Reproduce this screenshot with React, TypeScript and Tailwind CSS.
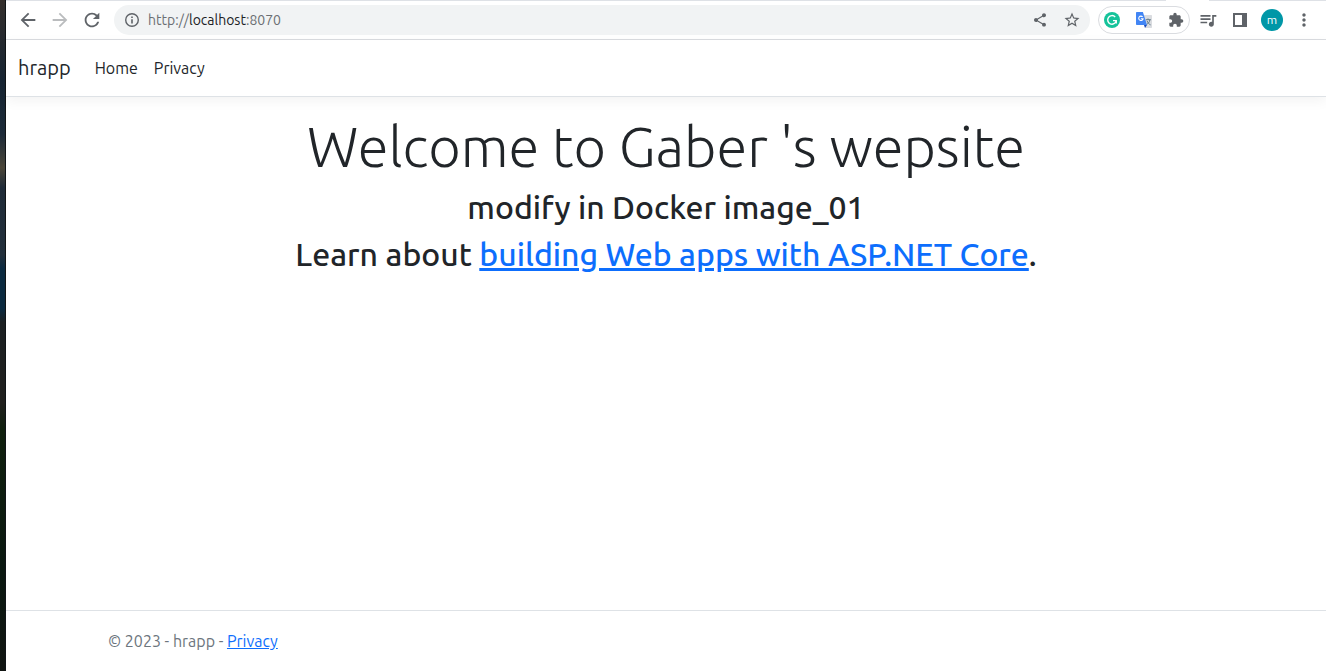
import React from "react";
import {
  MdArrowBack,
  MdArrowForward,
  MdExtension,
  MdMoreVert,
  MdQueueMusic,
  MdRefresh,
  MdShare,
  MdStarOutline,
} from "react-icons/md";

function ToolButton({ label, className = "text-[#5f6368]", children }: { label: string; className?: string; children: React.ReactNode }) {
  return (
    <button type="button" aria-label={label} className={`flex size-8 shrink-0 items-center justify-center ${className}`}>
      {children}
    </button>
  );
}

function InfoIcon() {
  return (
    <svg viewBox="0 0 16 16" className="size-4 text-[#5f6368]" aria-hidden="true">
      <circle cx="8" cy="8" r="6.3" fill="none" stroke="currentColor" strokeWidth="1.4" />
      <path d="M7.2 7.2h1.6v4.2H7.2zM7.2 4.5h1.6v1.6H7.2z" fill="currentColor" />
    </svg>
  );
}

function GrammarIcon() {
  return (
    <svg viewBox="0 0 16 16" className="size-4" aria-hidden="true">
      <circle cx="8" cy="8" r="8" fill="#15c39a" />
      <path d="M11.2 5A4.3 4.3 0 1 0 12.2 8.8" fill="none" stroke="#fff" strokeWidth="1.4" />
      <path d="M9 8.7h3.3v2.8" fill="none" stroke="#fff" strokeWidth="1.3" />
    </svg>
  );
}

function TranslateIcon() {
  return (
    <svg viewBox="0 0 16 16" className="size-4" aria-hidden="true">
      <path d="M6 3h9.3a.7.7 0 0 1 .7.7v11.6a.7.7 0 0 1-.7.7H9.5z" fill="#dadce0" />
      <path d="M9.8 7.7h5M12 6.5v1.2M13.9 7.8c-.4 2.3-1.8 4-3.6 4.9M11 8.8c.8 1.9 1.9 3.2 3.6 4.1" fill="none" stroke="#607988" strokeWidth="1" />
      <path d="M8 13h3l-2 3z" fill="#1a49b8" />
      <path d="M.8 0h6.1L11 13H.8a.8.8 0 0 1-.8-.8V.8A.8.8 0 0 1 .8 0z" fill="#4285f4" />
      <path d="M6.6 4.9A2.2 2.2 0 1 0 7.1 6.7H4.9" fill="none" stroke="#fff" strokeWidth="1.1" />
    </svg>
  );
}

function SidePanelIcon() {
  return (
    <svg viewBox="0 0 14 14" className="size-3.5" aria-hidden="true">
      <path d="M0 0h14v14H0zM2 2v10h7V2z" fill="currentColor" fillRule="evenodd" />
    </svg>
  );
}

function BrowserToolbar() {
  return (
    <div className="shrink-0">
      <div className="flex h-px">
        <div className="flex-1 bg-[#dee1e6]" />
        <div className="w-[43px]" />
        <div className="w-[117px] bg-[#dee1e6]" />
      </div>
      <div className="flex h-[39px] items-center border-b border-[#dadce0] px-[6px]">
        <ToolButton label="Back">
          <MdArrowBack size={22} />
        </ToolButton>
        <ToolButton label="Forward" className="text-[#babcbe]">
          <MdArrowForward size={22} />
        </ToolButton>
        <ToolButton label="Reload">
          <MdRefresh size={22} />
        </ToolButton>
        <div className="ml-1.5 flex h-[30px] flex-1 items-center rounded-full bg-[#f1f3f4] pr-0.5 pl-2.5">
          <InfoIcon />
          <button type="button" aria-label="Edit address" className="ml-2 flex-1 text-left text-sm text-[#6b6f73]">
            http://<span className="text-[#202124]">localhost</span>:8070
          </button>
          <ToolButton label="Share this page">
            <MdShare size={16} />
          </ToolButton>
          <ToolButton label="Bookmark this page">
            <MdStarOutline size={18} />
          </ToolButton>
        </div>
        <div className="mr-0.5 ml-2 flex h-7 w-[92px] items-center justify-center rounded-full border border-[#dadce0]">
          <ToolButton label="Grammarly">
            <GrammarIcon />
          </ToolButton>
          <ToolButton label="Google Translate">
            <TranslateIcon />
          </ToolButton>
          <ToolButton label="Extensions">
            <MdExtension size={16} />
          </ToolButton>
        </div>
        <ToolButton label="Media controls">
          <MdQueueMusic size={20} />
        </ToolButton>
        <ToolButton label="Side panel">
          <SidePanelIcon />
        </ToolButton>
        <ToolButton label="Profile">
          <span className="flex size-[22px] items-center justify-center rounded-full bg-[#0097a7] text-xs leading-none text-white">m</span>
        </ToolButton>
        <ToolButton label="Menu">
          <MdMoreVert size={20} />
        </ToolButton>
      </div>
    </div>
  );
}

export default function App() {
  return (
    <div className="flex min-h-screen bg-white font-['Ubuntu','Noto_Sans',sans-serif] text-[#212529]">
      <div className="w-[6px] shrink-0 border-r border-[#101416] bg-[linear-gradient(to_bottom,#342f2c_0%,#172533_12%,#1c2a38_20%,#4a4538_25%,#1f2b38_28%,#222f3b_38%,#0b2a40_40%,#0b2a40_46%,#1b2022_48%,#20201e_60%,#10200e_64%,#0a1810_85%,#111512_100%)]" />
      <div className="flex min-w-0 flex-1 flex-col">
        <BrowserToolbar />
        <header className="border-b border-[#dee2e6] shadow-[0_4px_12px_rgba(0,0,0,0.05)]">
          <nav className="flex h-14 items-center px-3">
            <a href="#home" className="mr-4 text-xl">hrapp</a>
            <a href="#home" className="p-2 text-base">Home</a>
            <a href="#privacy" className="p-2 text-base">Privacy</a>
          </nav>
        </header>
        <main className="mx-auto w-full max-w-[1140px] flex-1 px-3 pt-4 text-center">
          <h1 className="mb-2 text-[56px] leading-[67px] font-light">Welcome to Gaber 's wepsite</h1>
          <h2 className="mb-2 text-[32px] leading-[39px] font-medium">modify in Docker image_01</h2>
          <h2 className="text-[32px] leading-[39px] font-medium">
            Learn about{" "}
            <a href="#learn" className="text-[#0d6efd] underline">building Web apps with ASP.NET Core</a>.
          </h2>
        </main>
        <footer className="border-t border-[#dee2e6] text-[#6c757d]">
          <div className="mx-auto w-full max-w-[1140px] px-3 leading-[60px]">
            © 2023 - hrapp - <a href="#privacy" className="text-[#0d6efd] underline">Privacy</a>
          </div>
        </footer>
      </div>
    </div>
  );
}
